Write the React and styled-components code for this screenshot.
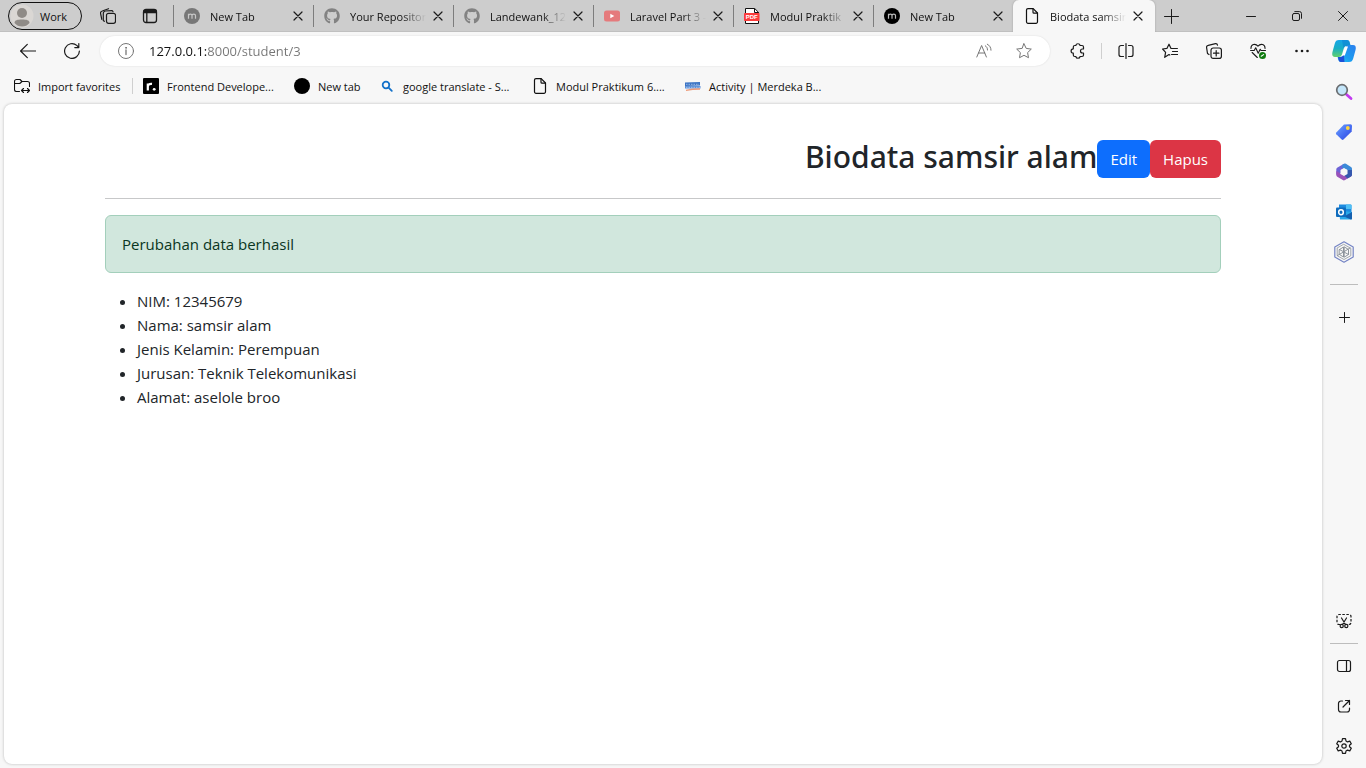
import React from "react";
import styled, { createGlobalStyle, css } from "styled-components";
import { FaGithub } from "react-icons/fa";

const GlobalStyle = createGlobalStyle`
  *, *::before, *::after { box-sizing: border-box; }
  body {
    margin: 0;
    background: #f7f7f7;
    color: #111;
    font-family: "Segoe UI", "Open Sans", "Noto Sans", sans-serif;
    font-size: 11px;
  }
  button, input { font: inherit; color: inherit; }
  svg { display: block; flex: none; }
`;

const Window = styled.div`
  display: flex;
  flex-direction: column;
  min-height: 100vh;
`;

/* ---------- tab strip ---------- */

const TabStrip = styled.header`
  display: flex;
  align-items: stretch;
  height: 32px;
  padding-left: 8px;
  background: #cdcdcd;
  box-shadow: inset 0 -1px 0 #c0c0c0;
`;

const ProfileButton = styled.button`
  display: flex;
  align-items: center;
  gap: 6px;
  width: 74px;
  height: 28px;
  margin: 2px 5px 0 0;
  padding: 0 0 0 1px;
  border: 1px solid #111;
  border-radius: 14px;
  background: transparent;
`;

const IconButton = styled.button`
  display: flex;
  flex: none;
  align-items: center;
  justify-content: center;
  width: ${(p) => p.$w || 44}px;
  height: ${(p) => p.$h || 32}px;
  padding: 0;
  border: 0;
  background: transparent;
  color: ${(p) => p.$color || "#1b1b1b"};
`;

const Tabs = styled.nav`
  display: flex;
  flex: 0 1 982px;
  min-width: 0;
  margin-left: 2px;
`;

const Tab = styled.div`
  display: flex;
  flex: 1 1 140px;
  align-items: center;
  min-width: 0;
  padding: 0 7px 0 10px;
  border-left: 1px solid transparent;
  border-image: linear-gradient(transparent 6px, #7d7d7d 6px, #7d7d7d 26px, transparent 26px) 1;
  ${(p) =>
    p.$active &&
    css`
      flex-basis: 142px;
      padding-right: 9px;
      border-image: none;
      border-radius: 6px 6px 0 0;
      background: #f7f7f7;
      box-shadow: 0 0 2px #999;
      clip-path: inset(0 -3px 0 -3px);
    `}
`;

const TabTitle = styled.a`
  flex: 1;
  margin: 0 4px 0 10px;
  overflow: hidden;
  color: inherit;
  text-decoration: none;
  white-space: nowrap;
  mask-image: linear-gradient(to right, #000 calc(100% - 24px), transparent);
`;

const WindowControls = styled.div`
  display: flex;
  margin-left: auto;
`;

/* ---------- toolbar ---------- */

const Toolbar = styled.div`
  display: flex;
  align-items: center;
  height: 38px;
  padding: 0 2px 0 6px;
`;

const AddressBar = styled.div`
  display: flex;
  flex: 1;
  align-items: center;
  height: 30px;
  margin: 0 6px;
  padding: 0 6px 0 18px;
  border-radius: 15px;
  background: #fff;
  box-shadow: 0 0 2px rgba(0, 0, 0, 0.12);
`;

const AddressInput = styled.input`
  flex: 1;
  min-width: 0;
  height: 22px;
  margin-left: 15px;
  padding: 0;
  border: 0;
  outline: 0;
  font-size: 13px;
  color: transparent;
  background: linear-gradient(to right, #111 58px, #767676 58px);
  background-clip: text;
`;

const ToolDivider = styled.span`
  width: 1px;
  height: 16px;
  margin: 0 2px 0 1px;
  background: #cfcfcf;
`;

/* ---------- favourites ---------- */

const Columns = styled.div`
  display: flex;
  flex: 1;
`;

const MainColumn = styled.div`
  display: flex;
  flex: 1;
  flex-direction: column;
  min-width: 0;
`;

const Favorites = styled.nav`
  display: flex;
  align-items: center;
  gap: 16px;
  height: 34px;
  padding: 0 14px 2px;
`;

const Favorite = styled.a`
  display: flex;
  flex: none;
  align-items: center;
  gap: 8px;
  width: ${(p) => p.$w}px;
  color: inherit;
  text-decoration: none;
  white-space: nowrap;
`;

const FavoriteDivider = styled.span`
  width: 1px;
  height: 16px;
  margin: 0 -6px;
  background: #cfcfcf;
`;

/* ---------- page ---------- */

const Page = styled.main`
  flex: 1;
  margin: 0 0 4px 4px;
  border-radius: 8px;
  background: #fff;
  box-shadow: 0 0 3px rgba(0, 0, 0, 0.25);
  color: #212529;
  font-size: 15px;
  line-height: 24px;
`;

const Container = styled.div`
  max-width: 1140px;
  margin: 0 auto;
  padding: 0 12px;
`;

const PageHeader = styled.div`
  display: flex;
  align-items: center;
  justify-content: flex-end;
  padding: 32px 0 16px;
`;

const Heading = styled.h1`
  margin: 0 0 4px;
  font-family: "Segoe UI", "Noto Sans", "Open Sans", sans-serif;
  font-size: 30px;
  font-weight: 500;
  line-height: 42px;
`;

const ActionButton = styled.button`
  height: 38px;
  padding: 0 13px;
  border: 0;
  border-radius: 6px;
  background: ${(p) => (p.$danger ? "#dc3545" : "#0d6efd")};
  color: #fff;
`;

const Rule = styled.hr`
  height: 1px;
  margin: 0 0 16px;
  border: 0;
  background: #c7c8c9;
`;

const Alert = styled.div`
  margin-bottom: 16px;
  padding: 16px;
  border: 1px solid #a3cfbb;
  border-radius: 6px;
  background: #d1e7dd;
  color: #0a3622;
`;

const DataList = styled.ul`
  margin: 0 0 16px;
  padding-left: 32px;
`;

/* ---------- sidebar ---------- */

const Sidebar = styled.aside`
  display: flex;
  flex-direction: column;
  align-items: center;
  width: 44px;
  padding: 2px 0;
`;

const SidebarDivider = styled.span`
  width: 28px;
  height: 1px;
  margin: ${(p) => (p.$wide ? "12px 0" : "2px 0")};
  background: #bdbdbd;
`;

const Spacer = styled.span`
  flex: 1;
`;

/* ---------- icons ---------- */

const Line = ({ size = 16, sw = 1, children, ...rest }) => (
  <svg width={size} height={size} viewBox={`0 0 ${size} ${size}`} fill="none" stroke="currentColor"
    strokeWidth={sw} strokeLinecap="round" strokeLinejoin="round" aria-hidden="true" {...rest}>
    {children}
  </svg>
);

const Avatar = () => (
  <svg width="24" height="24" viewBox="0 0 24 24" aria-hidden="true">
    <circle cx="12" cy="12" r="11.5" fill="#dad7d4" />
    <circle cx="12" cy="9" r="5" fill="#8f8b87" />
    <path d="M4.500 19c0-3 3-3.500 7.500-3.500s7.500.5 7.500 3.500c-2 2.500-4.500 3.500-7.500 3.500S6.500 21.500 4.500 19z" fill="#8f8b87" />
  </svg>
);
const Workspaces = () => (
  <Line sw="1.200">
    <rect x="6.500" y="5.300" width="9" height="10" rx="2" />
    <path d="M4.300 13.300 3.300 12.500V5.500A2.300 2.300 0 0 1 5.500 3L11.500 2.600a1.500 1.500 0 0 1 1.500 1" />
    <path d="M1.800 11.300.6 5.600A2.200 2.200 0 0 1 2.300 3L8.500.7" />
  </Line>
);
const TabActions = () => (
  <Line sw="1.300">
    <rect x="1.500" y="1.500" width="13" height="13" rx="2.500" />
    <path d="M2 2.500h12v2H2z" fill="currentColor" />
    <path d="M4.800 5v9" />
  </Line>
);
const MFavicon = ({ color }) => (
  <svg width="16" height="16" viewBox="0 0 16 16" aria-hidden="true">
    <circle cx="8" cy="8" r="8" fill={color} />
    <path d="M4.500 10.800V5.800M4.500 7.500C5 5.600 8 5.600 8 7.600v3.200M8 7.600c0-2 3.500-2 3.500 0v3.200" fill="none"
      stroke={color === "#000" ? "#bbb" : "#c8c8c8"} strokeWidth="1.200" />
  </svg>
);
const YouTube = () => (
  <svg width="16" height="16" viewBox="0 0 16 16" aria-hidden="true">
    <rect y="2.500" width="16" height="11" rx="2.500" fill="#e57a7c" />
    <path d="M6.300 5.700v4.600L10.300 8z" fill="#fff" />
  </svg>
);
const Pdf = () => (
  <svg width="16" height="16" viewBox="0 0 16 16" aria-hidden="true">
    <path d="M1.500.5h9.200l3.800 3.800v11.200h-13z" fill="#fff" stroke="#111" strokeWidth="1" />
    <path d="M10.500.5v4h4" fill="none" stroke="#111" />
    <rect y="5" width="15.500" height="8" rx=".8" fill="#fb3b3b" />
    <text x="7.700" y="11" textAnchor="middle" fontFamily="Liberation Sans, sans-serif" fontSize="6" fontWeight="700" fill="#fff">PDF</text>
  </svg>
);
const Doc = () => (
  <Line sw="1.200">
    <path d="M4 .6h5.200L13.500 5v8.800a1.500 1.500 0 0 1-1.500 1.500H4a1.500 1.500 0 0 1-1.500-1.500V2.100A1.500 1.500 0 0 1 4 .6z" />
    <path d="M9 .8v3.400a1 1 0 0 0 1 1h3.300" />
  </Line>
);
const Close = () => <Line size={10} sw="1.200"><path d="m1 1 8 8M9 1 1 9" /></Line>;
const Plus = ({ size = 15 }) => <Line size={size}><path d={`M${size / 2} .5v${size - 1}M.5 ${size / 2}h${size - 1}`} /></Line>;
const Minimize = () => <Line size={10}><path d="M.5 5.500h9" /></Line>;
const Restore = () => (
  <Line size={10}><rect x=".5" y="2.500" width="7" height="7" rx="1.500" /><path d="M2.800.6h4.700a2 2 0 0 1 2 2v4.700" /></Line>
);
const WinClose = () => <Line size={10}><path d="m.5.5 9 9M9.500.5l-9 9" /></Line>;

const Back = () => <Line sw="1.200"><path d="M15.500 8H.6M7.300 1.300.6 8l6.700 6.700" /></Line>;
const Refresh = () => <Line sw="1.200"><path d="M15.400 8A7.400 7.400 0 1 1 12.800 2.400L14.600 4.400M14.800.6V4.600H10.800" /></Line>;
const Info = () => <Line><circle cx="8" cy="8" r="7.500" /><path d="M8 7v4.500" strokeWidth="1.300" /><circle cx="8" cy="4.800" r=".5" fill="currentColor" /></Line>;
const ReadAloud = () => (
  <Line><path d="M.8 14 5.600 2.500 10.400 14M2.400 10h6.400M9.300 2.800c1.500 1 2.200 2.200 2.200 4.200M11.300 1.200c2.400 1.300 3.700 3.300 3.700 6" /></Line>
);
const Star = () => <Line><path d="m8 .8 2.200 4.600 5.100.7-3.700 3.500.9 5.100L8 12.300l-4.500 2.400.9-5.100L.7 6.100l5.100-.7z" /></Line>;
const Puzzle = () => (
  <Line sw="1.200">
    <path d="M4.800 2.500H5.800a2.200 2.200 0 0 1 4.300 0H12a1.500 1.500 0 0 1 1.500 1.500V6h-1a2 2 0 0 0 0 4h1v2A1.500 1.500 0 0 1 12 13.500h-1.900a2.200 2.200 0 0 1-4.300 0H4.800A1.500 1.500 0 0 1 3.300 12v-1.800a2.200 2.200 0 0 1 0-4.400V4A1.500 1.500 0 0 1 4.800 2.500z" />
  </Line>
);
const Split = () => (
  <Line sw="1.200"><path d="M5.500 2.500H3a2 2 0 0 0-2 2v7a2 2 0 0 0 2 2h2.500M10.500 2.500H13a2 2 0 0 1 2 2v7a2 2 0 0 1-2 2h-2.500M8 .6v14.800" /></Line>
);
const FavList = () => (
  <Line sw="1.200"><path d="M7.800 12 7 11.500l-4.300 2.800.9-4.900L.6 6l4.300-.6L7 1.200l2 4.300h6.400M10.500 8.500h5M9.500 11.500h6" /></Line>
);
const Collections = () => (
  <Line sw="1.200">
    <rect x="5" y="5" width="10.400" height="10.400" rx="2.200" /><path d="M10.200 7.500v5.400M7.500 10.200h5.400" />
    <path d="M3 11.500 1.500 10.500.6 4.700A2 2 0 0 1 2.200 2.300L9.500.7a1.800 1.800 0 0 1 2 1.500" />
  </Line>
);
const Health = () => (
  <Line sw="1.100">
    <path d="M1 5.500C.7 1 5.500.2 8 3.200 10.500.2 15.300 1 15 5.500M2.200 9.500 7.300 14.500M.6 7.500h3.600l1.500-2.700 2.500 5.500 2-4 .9 1.200h4.400" />
    <circle cx="12.500" cy="12.500" r="3.500" fill="#107c10" stroke="none" />
    <path d="m11.200 13.200 2.400-1.600" stroke="#fff" />
  </Line>
);
const More = () => <Line><g fill="currentColor" stroke="none"><circle cx="2.500" cy="8" r="1.300" /><circle cx="8" cy="8" r="1.300" /><circle cx="13.500" cy="8" r="1.300" /></g></Line>;
const Copilot = () => (
  <svg width="24" height="24" viewBox="0 0 24 24" aria-hidden="true">
    <defs>
      <linearGradient id="cpA" x1="0" y1="0" x2="0" y2="1"><stop offset="0" stopColor="#16a5e8" /><stop offset=".5" stopColor="#18aec4" /><stop offset="1" stopColor="#62d16b" /></linearGradient>
      <linearGradient id="cpB" x1="1" y1="0" x2="0" y2="1"><stop offset="0" stopColor="#2c80ee" /><stop offset=".6" stopColor="#1a9df0" /><stop offset="1" stopColor="#2bc7f4" /></linearGradient>
    </defs>
    <path d="M7 1h8c2 0 2.500 1.500 3 3.500l.6 2.500H15c-2 0-2.800 1-3.400 3l-1.500 5c-.6 2-1.500 3-3.600 3H3C0 18-.2 15.500.6 12.500l2.200-8C3.500 2 4.500 1 7 1z" fill="url(#cpA)" />
    <path d="M10 1h5c2 0 2.500 1.500 3 3.500l.6 2.500H15c-2 0-3 .8-3.600 2z" fill="#0c79cf" opacity=".5" />
    <path d="M17 23H9c-2 0-2.500-1.500-3-3l-.4-2H8c2 0 3-1 3.600-3L13.500 9c.6-2 1.500-3 3.600-3H21c3 0 3.200 2.500 2.400 5.500l-2.200 8C20.500 22 19.500 23 17 23z" fill="url(#cpB)" />
    <path d="M6 18h2.500c2 0 2.700-1 3.300-3l.7 8H9c-2 0-2.600-2-3-5z" fill="#1c4fd8" />
    <path d="M13.400 7.500h2.600l-3.200 9H9.200c1.300-.3 1.700-1.500 2.100-3z" fill="#fff" />
  </svg>
);

const ImportIcon = () => (
  <Line sw="1.100"><path d="M5.500 13.500H2.500a2 2 0 0 1-2-2v-8a2 2 0 0 1 2-2H6l2 2h5.500a2 2 0 0 1 2 2v3M.5 5.500H5.800L8 3.500M7.800 12.500h7.500M9.500 10.500l-2 2 2 2M13.500 10.500l2 2-2 2" /></Line>
);
const Roadmap = () => (
  <svg width="16" height="16" viewBox="0 0 16 16" aria-hidden="true">
    <rect width="16" height="16" rx="1" fill="#000" />
    <path d="M4.800 12.500V5.500M4.800 8.200C5.200 6.300 7 5.700 9 5.900" fill="none" stroke="#fff" strokeWidth="2.200" />
    <circle cx="11.200" cy="11.300" r="1.400" fill="#fff" />
  </svg>
);
const Dot = () => <svg width="16" height="16" aria-hidden="true"><circle cx="8" cy="8" r="8" /></svg>;
const SearchBlue = () => <Line sw="1.800" color="#1371c9"><circle cx="7" cy="7" r="3.300" /><path d="m9.600 9.600 3.200 3.200" /></Line>;
const Merdeka = () => (
  <svg width="16" height="16" viewBox="0 0 16 16" aria-hidden="true">
    <path d="M0 4.500 15 4v3.500L0 8z" fill="#3a73c4" /><path d="M0 8h15.500v2.500H0z" fill="#5a8fd8" />
    <path d="M1 6.300h13M1 9.300h14" stroke="#dbe7f8" strokeWidth=".6" strokeDasharray="1.500 1" />
    <path d="M1 12.300c5-1 9-1.300 14-1.300" fill="none" stroke="#ec9a78" strokeWidth="1.300" />
  </svg>
);

const SideSearch = () => (
  <svg width="18" height="18" viewBox="0 0 18 18" aria-hidden="true">
    <path d="m11.500 11.500 4.500 4" stroke="#c239f0" strokeWidth="2.800" strokeLinecap="round" />
    <circle cx="7" cy="7" r="5.300" fill="#c4e6fa" stroke="#6a6d70" strokeWidth="1.700" />
  </svg>
);
const Tag = () => (
  <svg width="18" height="18" viewBox="0 0 18 18" aria-hidden="true">
    <defs><linearGradient id="tg" x1="0" y1="0" x2="1" y2="1"><stop offset="0" stopColor="#6fa6ff" /><stop offset=".6" stopColor="#4267f0" /><stop offset="1" stopColor="#3849d8" /></linearGradient></defs>
    <path d="M9 1.500 15.500 1.200A1.500 1.500 0 0 1 17 2.700L16.700 8.500 8.500 16.600a1.300 1.300 0 0 1-1.800 0L1.300 11.300a1.300 1.300 0 0 1 0-1.800z" fill="url(#tg)" />
    <circle cx="12.800" cy="5" r="1.900" fill="#ffd43b" />
  </svg>
);
const M365 = () => (
  <svg width="18" height="18" viewBox="0 0 18 18" aria-hidden="true">
    <path d="M9.500.5 2.500 4.500a2 2 0 0 0-1.200 1.800v5.500L6 10V7l6.500-3.500z" fill="#6d63d6" />
    <path d="M7.500 1.500 10.500.6 16 4a2 2 0 0 1 1 1.800v6L12.200 10V7L7 4.500z" fill="#3b8ad8" />
    <path d="M1.300 8v4a2 2 0 0 0 1 1.700l5.500 3.400a2 2 0 0 0 2.200 0l6-3.600a2 2 0 0 0 1-1.700L12.300 9.500 9 12.500z" fill="#9a52b9" />
    <path d="M17 7v4.800a2 2 0 0 1-1 1.700l-3.500 2-3.300-3.200 3-2V7z" fill="#3457ae" />
    <path d="m9 5 3.500 2v4L9 13l-3.500-2V7z" fill="#f7f7f7" />
  </svg>
);
const Outlook = () => (
  <svg width="18" height="18" viewBox="0 0 18 18" aria-hidden="true">
    <path d="M4 1.500h11.500a1 1 0 0 1 1 1V9H4z" fill="#1c8be0" /><path d="M11 1.500h4.500a1 1 0 0 1 1 1V6H11z" fill="#4fc0f5" />
    <path d="M4 7.500 17 9v6.500a1 1 0 0 1-1 1H5z" fill="#28a8ea" /><path d="m17 9-8 4.500 7 3a1 1 0 0 0 1-1z" fill="#145fae" />
    <rect x="1" y="4.500" width="10" height="9.500" rx="1" fill="#0f6cbd" />
    <ellipse cx="6" cy="9.200" rx="2.300" ry="2.500" fill="none" stroke="#fff" strokeWidth="1.500" />
  </svg>
);
const Hex = () => (
  <Line size={22} color="#8d949c">
    <path d="M11 .8 20.200 6v10L11 21.200 1.800 16V6z" stroke="#7484c4" strokeWidth="1.200" />
    <path d="M11 3.500 17.800 7.300v7.400L11 18.500l-6.800-3.800V7.300z" strokeWidth=".8" />
    <path d="m6.500 8.500 4-2.500v10l-4-2.500zM11.500 6l4 2.500v5l-4 2.500zM4.500 14.500l6-3.500 6.500-4M6.500 8.500l9 5" />
  </Line>
);
const Snip = () => (
  <Line sw="1.200">
    <path d="M4 11.500H3a2 2 0 0 1-2-2v-6a2 2 0 0 1 2-2h10a2 2 0 0 1 2 2v6a2 2 0 0 1-2 2h-1" strokeDasharray="2.500 1.500" strokeLinecap="butt" />
    <path d="m5.500 5 4 6.500M10.500 5l-4 6.500" /><circle cx="5.700" cy="13" r="1.600" /><circle cx="10.300" cy="13" r="1.600" />
  </Line>
);
const Panel = () => <Line sw="1.200"><rect x="1.500" y="2.500" width="13" height="11" rx="2" /><path d="M10.500 2.500v11" /></Line>;
const External = () => <Line sw="1.200"><path d="M6.500 3H5a2.500 2.500 0 0 0-2.500 2.500v6A2.500 2.500 0 0 0 5 14h6a2.500 2.500 0 0 0 2.500-2.500V10M7 9l6.500-6.500M9.500 2.500h4v4" /></Line>;
const Gear = () => (
  <Line sw="1.200">
    <path d="M6.500.6h3l.5 2.400 1.500.9 2.300-.8 1.500 2.600-1.800 1.600v1.400l1.800 1.600-1.500 2.600-2.300-.8-1.500.9-.5 2.400h-3L6 13l-1.500-.9-2.300.8L.7 10.300l1.800-1.600V7.300L.7 5.700l1.500-2.600 2.300.8L6 3z" />
    <circle cx="8" cy="8" r="2.200" />
  </Line>
);

/* ---------- data ---------- */

const tabs = [
  { title: "New Tab", icon: <MFavicon color="#777" /> },
  { title: "Your Repositor", icon: <FaGithub size={16} color="#828282" /> },
  { title: "Landewank_12", icon: <FaGithub size={16} color="#828282" /> },
  { title: "Laravel Part 3 -", icon: <YouTube /> },
  { title: "Modul Praktik", icon: <Pdf /> },
  { title: "New Tab", icon: <MFavicon color="#000" /> },
  { title: "Biodata samsir", icon: <Doc />, active: true },
];

const favorites = [
  { label: "Frontend Develope...", icon: <Roadmap />, width: 135 },
  { label: "New tab", icon: <Dot />, width: 69 },
  { label: "google translate - S...", icon: <SearchBlue />, width: 137 },
  { label: "Modul Praktikum 6....", icon: <Doc />, width: 137 },
  { label: "Activity | Merdeka B...", icon: <Merdeka />, width: 138 },
];

const tools = [
  ["Split screen", <Split />],
  ["Favorites", <FavList />],
  ["Collections", <Collections />],
  ["Browser essentials", <Health />],
  ["Settings and more", <More />],
];

const student = [
  ["NIM", "12345679"],
  ["Nama", "samsir alam"],
  ["Jenis Kelamin", "Perempuan"],
  ["Jurusan", "Teknik Telekomunikasi"],
  ["Alamat", "aselole broo"],
];

const apps = [
  ["Search", <SideSearch />],
  ["Shopping", <Tag />],
  ["Microsoft 365", <M365 />],
  ["Outlook", <Outlook />],
  ["Designer", <Hex />],
];

const SideButton = ({ label, children }) => (
  <IconButton $h={40} aria-label={label}>{children}</IconButton>
);

export default function App() {
  return (
    <Window>
      <GlobalStyle />
      <TabStrip>
        <ProfileButton><Avatar />Work</ProfileButton>
        <IconButton $w={42} aria-label="Workspaces"><Workspaces /></IconButton>
        <IconButton $w={42} aria-label="Tab actions"><TabActions /></IconButton>
        <Tabs aria-label="Tabs">
          {tabs.map((t, i) => (
            <Tab key={i} $active={t.active}>
              {t.icon}
              <TabTitle href="#">{t.title}</TabTitle>
              <IconButton $w={16} aria-label="Close tab"><Close /></IconButton>
            </Tab>
          ))}
        </Tabs>
        <IconButton $w={33} aria-label="New tab"><Plus /></IconButton>
        <WindowControls>
          <IconButton $w={46} aria-label="Minimize"><Minimize /></IconButton>
          <IconButton $w={46} aria-label="Restore"><Restore /></IconButton>
          <IconButton $w={46} aria-label="Close window"><WinClose /></IconButton>
        </WindowControls>
      </TabStrip>

      <Toolbar>
        <IconButton aria-label="Back"><Back /></IconButton>
        <IconButton aria-label="Refresh"><Refresh /></IconButton>
        <AddressBar>
          <IconButton $w={16} $color="#767676" aria-label="Site information"><Info /></IconButton>
          <AddressInput aria-label="Address" defaultValue="127.0.0.1:8000/student/3" />
          <IconButton $w={40} $color="#767676" aria-label="Read aloud"><ReadAloud /></IconButton>
          <IconButton $w={40} $color="#767676" aria-label="Add to favorites"><Star /></IconButton>
        </AddressBar>
        <IconButton aria-label="Extensions"><Puzzle /></IconButton>
        <ToolDivider />
        {tools.map(([label, icon]) => (
          <IconButton key={label} aria-label={label}>{icon}</IconButton>
        ))}
        <IconButton $w={40} aria-label="Copilot"><Copilot /></IconButton>
      </Toolbar>

      <Columns>
        <MainColumn>
          <Favorites aria-label="Favorites bar">
            <Favorite href="#" $w={108}><ImportIcon />Import favorites</Favorite>
            <FavoriteDivider />
            {favorites.map((f) => (
              <Favorite key={f.label} href="#" $w={f.width}>{f.icon}{f.label}</Favorite>
            ))}
          </Favorites>
          <Page>
            <Container>
              <PageHeader>
                <Heading>Biodata samsir alam</Heading>
                <ActionButton>Edit</ActionButton>
                <ActionButton $danger>Hapus</ActionButton>
              </PageHeader>
              <Rule />
              <Alert role="alert">Perubahan data berhasil</Alert>
              <DataList>
                {student.map(([key, value]) => (
                  <li key={key}>{key}: {value}</li>
                ))}
              </DataList>
            </Container>
          </Page>
        </MainColumn>
        <Sidebar>
          {apps.map(([label, icon]) => (
            <SideButton key={label} label={label}>{icon}</SideButton>
          ))}
          <SidebarDivider $wide />
          <SideButton label="Customize"><Plus size={11} /></SideButton>
          <Spacer />
          <SideButton label="Screenshot"><Snip /></SideButton>
          <SidebarDivider />
          <SideButton label="Hide sidebar"><Panel /></SideButton>
          <SideButton label="Open in new window"><External /></SideButton>
          <SideButton label="Settings"><Gear /></SideButton>
        </Sidebar>
      </Columns>
    </Window>
  );
}
